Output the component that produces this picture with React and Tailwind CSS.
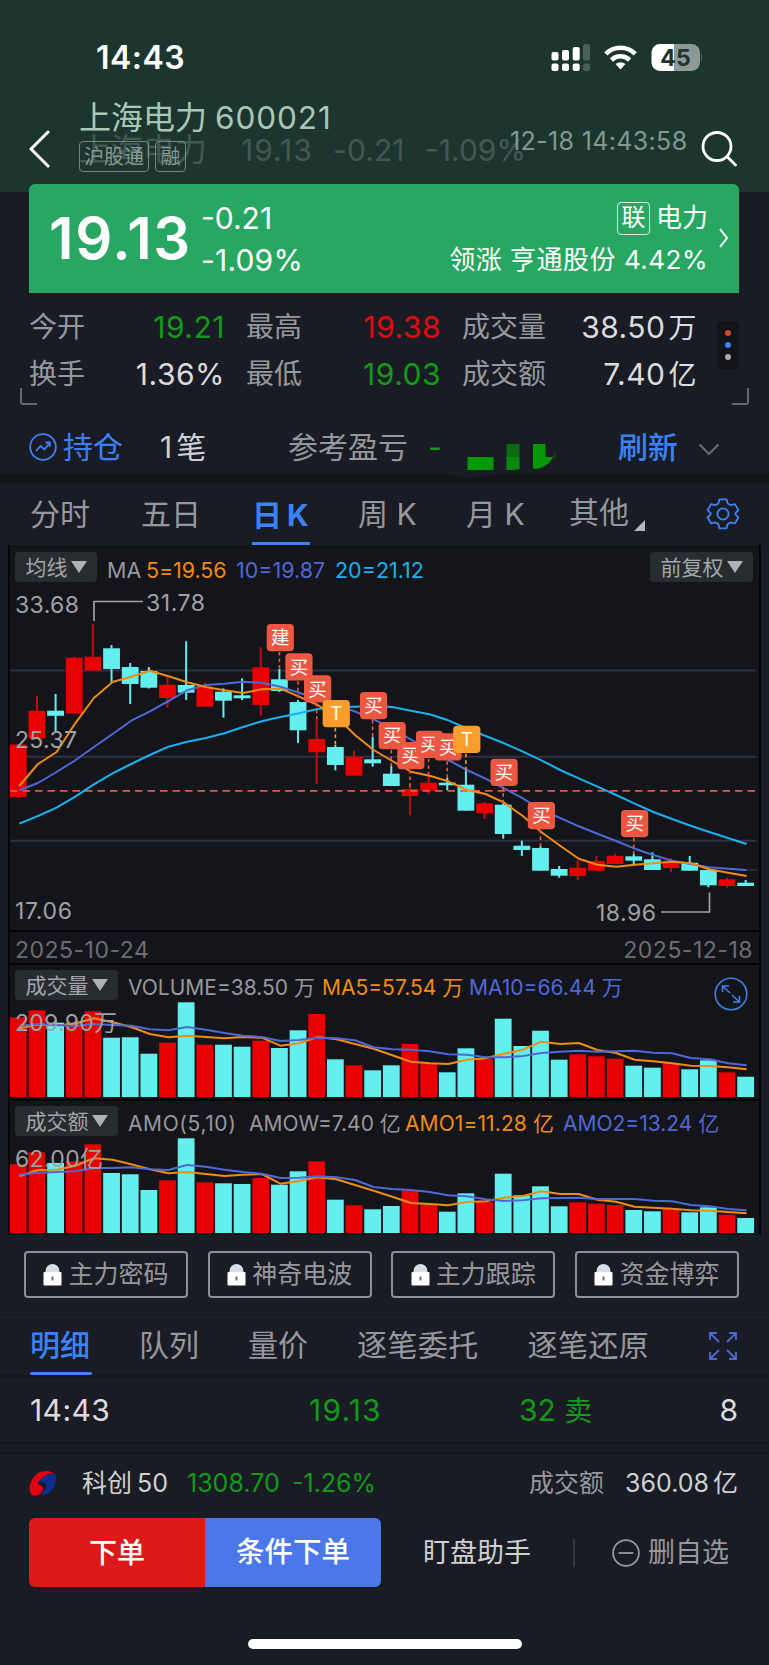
import React from 'react'

const RED = '#e90000'
const CYAN = '#62efee'
const ORANGE = '#f08b16'
const INDIGO = '#5068d6'
const SKY = '#1bb0ee'

// centre of the n-th trading day on the x axis
const cx = (i) => 18.3 + i * 18.65

// [up, open/close top, open/close bottom, high, low]
const candles = [
  [1, 744.5, 797, 744.5, 797],
  [1, 710.7, 738.5, 696, 738.5],
  [0, 710.7, 715.8, 694, 732.5],
  [1, 657.7, 713.5, 656.8, 713.5],
  [1, 656.7, 670.5, 623.7, 670.5],
  [0, 648.3, 669, 645, 682.7],
  [0, 667, 684, 663, 704],
  [0, 671, 687.7, 667, 688.5],
  [1, 684.7, 698, 677.3, 707.7],
  [0, 685, 692.7, 641.3, 700],
  [1, 686.7, 706.7, 682.3, 706.7],
  [0, 691.7, 700.7, 688.3, 717.7],
  [0, 695.3, 698.3, 678.3, 700],
  [1, 667.3, 705, 647.3, 715.7],
  [0, 679.3, 691, 669, 692],
  [0, 702, 730.3, 700, 743],
  [1, 739, 752.3, 718.3, 784],
  [0, 747, 765, 745, 770.3],
  [1, 756.7, 775.7, 750.7, 775.7],
  [0, 759.3, 763.3, 736.7, 766.7],
  [0, 773.7, 786, 766, 786],
  [1, 789, 796, 785, 815.3],
  [1, 782.7, 790.7, 775, 794],
  [0, 782.7, 785.3, 777.7, 790.3],
  [0, 784.7, 810.7, 769.3, 810.7],
  [1, 803.3, 813.3, 801.7, 819],
  [0, 804.7, 834, 803.3, 838.7],
  [0, 845.7, 850, 840.7, 856],
  [0, 848, 870.7, 846, 870.7],
  [0, 869, 875.7, 866, 877.7],
  [1, 867.7, 876, 860, 880],
  [1, 861, 870.7, 855.7, 870.7],
  [1, 855.7, 864, 854, 864],
  [0, 856.3, 860.7, 854, 865.3],
  [0, 859.3, 870, 852.3, 870],
  [1, 860.7, 868, 858.3, 872],
  [0, 862.7, 870.7, 856, 870.7],
  [0, 870, 885.3, 870, 887.3],
  [1, 879.3, 886, 877.7, 887.7],
  [0, 882.7, 886, 880, 886],
]

const ma5 = [786, 764, 752, 723.3, 698, 682, 676.7, 670.7, 676.3, 682.3, 687, 690.3, 693, 689.3, 688.7, 696.7, 705, 716.7, 735, 750, 761, 771.7, 775.7, 781.3, 790, 794, 802.7, 816, 832.3, 845.7, 858.7, 864.7, 866.7, 864.7, 863.3, 861.7, 863.3, 869.3, 872.7, 876]
const ma10 = [790.3, 783, 772, 760.3, 747, 734, 720.7, 711.3, 701, 690.3, 685, 683.7, 681.7, 682.7, 686.7, 692.7, 699, 705, 711.5, 719.3, 728.3, 739.7, 749.3, 760, 770, 778.7, 788.3, 798.3, 810, 818, 826.3, 833.7, 841, 848.7, 855, 860.7, 864, 867.3, 868.7, 870]
const ma20 = [823.7, 816, 807.7, 796.7, 784.3, 773.3, 764, 755, 746.7, 741.7, 738, 733.3, 727, 721.3, 717, 713.3, 709, 707.3, 706.7, 706, 707, 710.7, 714.3, 720.3, 728.3, 736, 743.3, 751.7, 760.3, 770, 778.3, 786.7, 795, 803.7, 812, 819, 825.7, 832, 838, 844]

// [day, label, top of the badge, end of the stem]
const marks = [
  [14, '建', 624, 669],
  [15, '买', 653.3, 700],
  [16, '买', 675.3, 719],
  [17, 'T', 700, 745],
  [19, '买', 692, 737],
  [20, '买', 722, 766],
  [21, '买', 742, 787],
  [22, '买', 730.7, 776],
  [23, '买', 733.3, 779],
  [24, 'T', 725.7, 770],
  [26, '买', 758.7, 804],
  [28, '买', 802, 847],
  [33, '买', 810, 855],
]

const volume = {
  bars: [79.7, 86.7, 74.3, 74.3, 85.7, 59.3, 59.7, 43.3, 54.3, 94.7, 52.3, 52.3, 50.3, 56.3, 49, 66.7, 83, 37.7, 31.7, 26.7, 31.7, 53, 33.3, 24.7, 48.7, 38, 78.3, 51, 66.3, 37.3, 42.7, 40.7, 38.3, 31.3, 29.3, 34, 27.7, 36.7, 24.7, 20.3],
  short: [68.5, 72.5, 71.5, 73.5, 78.7, 74.7, 70, 63, 59.7, 61.3, 60, 58.7, 60, 59.3, 51.3, 53.7, 60, 57.7, 53, 48.3, 41.7, 35.3, 33.7, 33, 37.3, 38.7, 43.3, 47.3, 55.3, 53, 54, 47, 44, 37.3, 35.7, 33.7, 31.3, 31, 29.7, 27.7],
  long: [71, 73, 72, 71, 73, 72, 71.3, 67.7, 66.7, 70, 67.3, 64, 61.3, 60, 56, 57, 59.3, 58.7, 56.7, 49.7, 47.7, 47.3, 45.7, 42.7, 42.3, 39.7, 39.7, 41, 44, 45.3, 46.3, 45.3, 45.7, 46.3, 44.3, 43.7, 39, 37.7, 33.7, 31.7],
}

const amount = {
  bars: [68.7, 80.7, 70, 71.7, 88.7, 60, 58.7, 43, 52.7, 94.7, 50.7, 49.7, 49, 55, 48.3, 61.7, 71.7, 33.3, 27.7, 23.7, 27, 43, 28.7, 21.3, 39.7, 31, 59.3, 37.7, 46.7, 26.7, 30.7, 29.3, 28, 23, 21.7, 24, 20.7, 25.7, 18.3, 15],
  short: [56.7, 63, 63.3, 67.3, 74.7, 73.3, 68.7, 63.7, 59.7, 61, 59, 57, 58.3, 59, 49.3, 52, 55.7, 53.7, 48, 42.3, 36.3, 30, 29, 27.7, 31, 31.7, 35.3, 37, 41.7, 39, 39, 33.3, 31.3, 26.3, 25.3, 24.3, 22.7, 22.3, 21, 19.7],
  long: [58.3, 60.3, 61, 61.7, 65, 65, 65.7, 63.7, 63, 68, 66.3, 63.3, 61, 59.3, 55, 55.3, 56.7, 55.7, 53, 46, 44, 43, 41, 37.7, 36.7, 33.7, 32, 32.7, 34.7, 35, 35.3, 34, 34, 34, 32.3, 31.7, 28, 26.7, 24, 22.7],
}

// averages are drawn one pixel right of the candle centres
const toPoints = (list, fn = (v) => v) => list.map((v, i) => `${cx(i) + 1},${fn(v)}`).join(' ')

function Line({ points, color }) {
  return <polyline points={points} fill="none" stroke={color} strokeWidth="2" strokeLinejoin="round" />
}

function StatusBar() {
  return (
    <div className="flex h-[90px] items-start justify-between pt-[38px] pl-[96px] pr-[67px]">
      <span className="text-[32px] leading-[40px] font-semibold tracking-[0.5px] text-white">14:43</span>
      <svg width="152" height="30" viewBox="550 43 152 30" className="mt-[5px]">
        <g fill="#fff">
          <rect x="551.5" y="52" width="7" height="8.5" rx="2" />
          <rect x="562" y="50" width="7" height="10.5" rx="2" />
          <rect x="572.7" y="47" width="7" height="13.5" rx="2" />
          <rect x="551.5" y="63.5" width="7" height="7.5" rx="2" />
          <rect x="562" y="63.5" width="7" height="7.5" rx="2" />
          <rect x="572.7" y="63.5" width="7" height="7.5" rx="2" />
        </g>
        <g fill="#4b5f5a">
          <rect x="583" y="44" width="7" height="16.5" rx="2" />
          <rect x="583" y="63.5" width="7" height="7.5" rx="2" />
        </g>
        <g fill="none" stroke="#fff" strokeWidth="4.6">
          <path d="M605.8 53.8a21 21 0 0 1 29.4 0" />
          <path d="M611.4 60a13 13 0 0 1 18.2 0" />
        </g>
        <path d="M620.5 69.5l-5-5.4a7.5 7.5 0 0 1 10 0z" fill="#fff" />
        <path d="M660 44h14v27h-14a8.5 8.5 0 0 1-8.5-8.5v-10a8.5 8.5 0 0 1 8.5-8.5z" fill="#fff" />
        <path d="M674 44h17.5a8.5 8.5 0 0 1 8.5 8.5v10a8.5 8.5 0 0 1-8.5 8.5h-17.5z" fill="#8e9996" />
        <path d="M701.5 54c4 1 4 6.500 0 7.500z" fill="#8e9996" />
        <text x="675.5" y="65.5" textAnchor="middle" fontSize="23" fontWeight="700" fill="#1d342f">45</text>
      </svg>
    </div>
  )
}

function Header() {
  return (
    <header className="h-[192px] bg-[#1d352f]">
      <StatusBar />
      <div className="relative flex h-[94px]">
        <svg width="22" height="38" viewBox="0 0 22 38" className="ml-[28px] mt-[40px]" fill="none" stroke="#fff" strokeWidth="3">
          <path d="M20 2L3 19l17 17" strokeLinecap="round" strokeLinejoin="round" />
        </svg>
        <div className="ml-[29px] mt-[8px] w-[431px]">
          <div className="flex h-[40px] items-center whitespace-nowrap text-[#a9c7b7]">
            <span className="text-[32px] leading-none">上海电力</span>
            <span className="ml-[8px] text-[31.5px] leading-none tracking-[0.9px]">600021</span>
          </div>
          <div className="mt-[3px] flex gap-[6px] text-[20px] text-[#84998f]">
            <span className="flex h-[31px] w-[70px] items-center justify-center rounded-[4px] border border-[#71867d] leading-none">沪股通</span>
            <span className="flex h-[31px] w-[31px] items-center justify-center rounded-[4px] border border-[#71867d] leading-none">融</span>
          </div>
        </div>
        <span className="mt-[34px] w-[180px] text-[25px] leading-[34px] tracking-[0.35px] whitespace-nowrap text-[#84988f]">12-18 14:43:58</span>
        <svg width="38" height="38" viewBox="0 0 38 38" className="ml-[11px] mt-[40px]" fill="none" stroke="#fff" strokeWidth="2.8" strokeLinecap="round">
          <circle cx="16" cy="16.5" r="14" />
          <path d="M26 26.5l8.5 8.5" />
        </svg>
        <div className="absolute left-[79px] top-[40px] flex h-[40px] items-center text-[30px] leading-none whitespace-nowrap text-[#9aa8a3] opacity-30">
          <span className="w-[162px] text-[32px]">上海电力</span>
          <span className="w-[92px] tracking-[1px]">19.13</span>
          <span className="w-[92px] tracking-[0.1px]">-0.21</span>
          <span className="tracking-[0px]">-1.09%</span>
        </div>
      </div>
    </header>
  )
}

function PriceCard() {
  return (
    <div className="relative mr-[30px] ml-[29px] -mt-2 flex h-[109px] rounded-t-[6px] bg-[#27a761] text-white">
      <span className="w-[172px] pl-[20px] text-[58px] leading-[108px] font-semibold tracking-[1.6px]">19.13</span>
      <div className="pt-[15px] text-[30px] leading-[38px]">
        <div>-0.21</div>
        <div className="mt-[4px] tracking-[0.2px]">-1.09%</div>
      </div>
      <div className="ml-auto pt-[16px] text-[26px]">
        <div className="flex h-[36px] items-center justify-end gap-[6px] leading-none">
          <span className="flex h-[33px] w-[33px] items-center justify-center rounded-[4px] border border-white/80 text-[24px]">联</span>
          <span>电力</span>
        </div>
        <div className="mt-[6px] text-right leading-[36px] tracking-[0.5px] whitespace-nowrap">领涨 亨通股份 4.42%</div>
      </div>
      <svg width="12" height="22" viewBox="0 0 12 22" className="mt-[43px] ml-[10px] mr-[9px]" fill="none" stroke="#fff" strokeWidth="2">
        <path d="M2 2l7 9-7 9" />
      </svg>
    </div>
  )
}

function Stat({ label, value, color }) {
  return (
    <div className="flex items-center justify-between whitespace-nowrap">
      <span className="text-[28px] leading-none text-[#97989d]">{label}</span>
      <span className={`text-[30px] leading-none tracking-[0.5px] ${color}`}>{value}</span>
    </div>
  )
}

function Stats() {
  return (
    <div className="h-[111px]">
      <div className="flex pt-[10px] pl-[29px]">
        <div className="grid w-[668px] grid-cols-[196px_195px_235px] grid-rows-[47px_47px] gap-x-[21px]">
          <Stat label="今开" value="19.21" color="text-[#129a18]" />
          <Stat label="最高" value="19.38" color="text-[#e20b0b]" />
          <Stat label="成交量" value={<>38.50<span className="ml-[3px] text-[28px]">万</span></>} color="text-[#dcdcde]" />
          <Stat label="换手" value="1.36%" color="text-[#dcdcde]" />
          <Stat label="最低" value="19.03" color="text-[#129a18]" />
          <Stat label="成交额" value={<>7.40<span className="ml-[3px] text-[28px]">亿</span></>} color="text-[#dcdcde]" />
        </div>
        <div className="ml-[20px] mt-[18px] flex h-[48px] w-[22px] flex-col items-center justify-center gap-[6px] rounded-[4px] bg-[#131419]">
          <span className="h-[6px] w-[6px] rounded-full bg-[#d5482f]" />
          <span className="h-[6px] w-[6px] rounded-full bg-[#3c82f4]" />
          <span className="h-[6px] w-[6px] rounded-full bg-[#aaabae]" />
        </div>
      </div>
      <div className="-mt-[9px] flex justify-between px-[20px]">
        <span className="h-[17px] w-[17px] rounded-bl-[3px] border-b-2 border-l-2 border-[#66686e]" />
        <span className="h-[17px] w-[17px] rounded-br-[3px] border-r-2 border-b-2 border-[#66686e]" />
      </div>
    </div>
  )
}

function Position() {
  return (
    <div className="flex h-[70px] items-center pt-[15px] text-[30px] leading-none whitespace-nowrap">
      <svg width="28" height="28" viewBox="0 0 28 28" className="ml-[29px]" fill="none" stroke="#3c82f6" strokeWidth="1.8">
        <circle cx="14" cy="14" r="12.8" />
        <path d="M7 18l4.5-5 4 3.5 5-6.5M16.5 9.5h4.3v4.3" />
      </svg>
      <span className="ml-[6px] text-[#3c82f6]">持仓</span>
      <span className="ml-[37px] w-[128px] text-[#cfd0d2]"><span className="mr-[4px]">1</span>笔</span>
      <span className="text-[#97989d]">参考盈亏</span>
      <span className="ml-[20px] w-[30px] text-[#129a18]">-</span>
      <svg width="110" height="28" viewBox="460 442 110 28" className="mt-[20px]">
        <rect x="469.5" y="456" width="26" height="13" fill="#079807" />
        <rect x="508.5" y="443" width="13" height="13" fill="#0b6b12" />
        <path d="M508.500 456h13v12q-4 1-8 1h-5z" fill="#0a8a0d" />
        <path d="M535 443h12.500v13h7.500c-3 6-9 11.500-18 12l-2-1z" fill="#079807" />
        <path d="M555 456q3-4 3.500-7-.5 5-3 9z" fill="#0b6b12" />
      </svg>
      <span className="ml-auto font-medium text-[#3c82f6]">刷新</span>
      <svg width="22" height="13" viewBox="0 0 22 13" className="mt-[6px] ml-[20px] mr-[49px]" fill="none" stroke="#66686e" strokeWidth="2.2">
        <path d="M1.500 1.500L11 11l9.500-9.500" />
      </svg>
    </div>
  )
}

function PeriodTabs() {
  return (
    <div className="grid h-[62px] grid-cols-[111px_111px_106px_108px_103px_138px_1fr] items-center pl-[30px] text-[30px] leading-none whitespace-nowrap text-[#97989d]">
      <span>分时</span>
      <span>五日</span>
      <span className="flex h-[62px] w-[58px] flex-col justify-between text-[#3c82f6]">
        <span className="pt-[17px] font-bold">日<span className="ml-[5px]">K</span></span>
        <span className="h-[3px] bg-[#3c82f6]" />
      </span>
      <span>周 K</span>
      <span>月 K</span>
      <span className="flex">
        其他
        <svg width="11" height="11" viewBox="0 0 11 11" className="mt-[23px] ml-[5px]">
          <path d="M11 0v11H0z" fill="#b4b5b8" />
        </svg>
      </span>
      <svg width="34" height="34" viewBox="0 0 34 34" fill="none" stroke="#3c82f6" strokeWidth="1.8" strokeLinejoin="round" className="-ml-px">
        <path d="M13.500 2.500h7l1.200 4.200 3 1.700 4.200-1.100 3.500 6-3 3.100v1.200l3 3.100-3.500 6-4.200-1.100-3 1.700-1.200 4.200h-7l-1.200-4.200-3-1.700-4.200 1.100-3.500-6 3-3.100v-1.200l-3-3.100 3.500-6 4.200 1.100 3-1.700z" transform="translate(0 -0.200)" />
        <circle cx="17" cy="17" r="5.6" />
      </svg>
    </div>
  )
}

function Chip({ children, className }) {
  return (
    <span className={`flex h-[30px] items-center justify-center rounded-[4px] bg-[#282b30] text-[21px] leading-none text-[#a5a6aa] ${className}`}>
      {children}
      <svg width="16" height="12" viewBox="0 0 16 12" className="ml-[3px]">
        <path d="M0 0h16L8 12z" fill="#b0b1b4" />
      </svg>
    </span>
  )
}

function KChart() {
  return (
    <div className="h-[385px]">
      <div className="flex h-[38px] items-start pt-[7px] pr-[6px] pl-[5px] text-[21.5px] leading-[36px] whitespace-nowrap">
        <Chip className="w-[82px]">均线</Chip>
        <span className="ml-[10px] w-[39px] text-[#97989d]">MA</span>
        <span className="w-[90px] tracking-[-0.1px] text-[#f08b16]">5=19.56</span>
        <span className="w-[99px] text-[#5068d6]">10=19.87</span>
        <span className="text-[#1bb0ee]">20=21.12</span>
        <Chip className="ml-auto w-[103px]">前复权</Chip>
      </div>
      <svg width="748" height="347" viewBox="10 583 748 347" className="block">
        <g stroke="#2f3040" strokeWidth="2">
          <path d="M10 670.5H756M10 756.7H756M10 840.7H756" />
          <path d="M736 870H757" stroke="#2a2b31" />
        </g>
        {candles.map(([up, top, bottom, high, low], i) => (
          <g key={i} fill={up ? RED : CYAN}>
            <rect x={cx(i) - 1} y={high} width="2" height={low - high} fill={up ? '#c40a12' : CYAN} />
            <rect x={cx(i) - 8.4} y={top} width="16.8" height={bottom - top} />
          </g>
        ))}
        <path d="M10 790.8H756" stroke="#e0594c" strokeWidth="1.8" strokeDasharray="7.5 5" />
        <Line points={toPoints(ma20)} color={SKY} />
        <Line points={toPoints(ma10)} color={INDIGO} />
        <Line points={toPoints(ma5)} color={ORANGE} />
        {marks.map(([day, label, y, end]) => {
          const fill = label === 'T' ? '#fb9d2c' : '#ec5741'
          return (
            <g key={day}>
              <path d={`M${cx(day)} ${y + 28}V${end}`} stroke={fill} strokeWidth="1.6" strokeDasharray="3.5 3" />
              <rect x={cx(day) - 12.7} y={y} width="27.2" height="27.2" rx="4" fill={fill} />
              <text x={cx(day) + 0.9} y={y + 20.3} textAnchor="middle" fontSize="18.5" fill="#fff">{label}</text>
            </g>
          )
        })}
        <g fontSize="23" fill="#a0a1a5">
          <text x="15" y="613" textLength="64">33.68</text>
          <text x="15" y="747.5" textLength="62">25.37</text>
          <text x="15" y="918.5" textLength="57">17.06</text>
          <text x="146" y="610.5" textLength="59">31.78</text>
          <text x="596" y="921" textLength="60">18.96</text>
        </g>
        <g fill="none" stroke="#a0a1a5" strokeWidth="1.7">
          <path d="M94 621V601.5H143" />
          <path d="M661 912H709.5V892.5" />
        </g>
      </svg>
    </div>
  )
}

function BarChart({ data, scale, scaleWidth }) {
  const up = (v) => 95 - v
  return (
    <svg width="748" height="97" viewBox="10 0 748 97" className="block">
      {data.bars.map((h, i) => (
        <rect key={i} x={cx(i) - 8.4} y={up(h)} width="16.8" height={h} fill={candles[i][0] ? RED : CYAN} />
      ))}
      <Line points={toPoints(data.short, up)} color={ORANGE} />
      <Line points={toPoints(data.long, up)} color={INDIGO} />
      <text x="15" y="28.5" fontSize="23" fill="#a0a1a5" textLength={scaleWidth}>{scale}</text>
    </svg>
  )
}

function SubPanel({ name, children, data, scale, scaleWidth, action }) {
  return (
    <div className="relative border-t-2 border-[#030407]">
      <div className="flex h-[37px] items-start pt-[5px] pl-[5px] text-[21px] leading-[36px] whitespace-nowrap">
        <Chip className="w-[103px]">{name}</Chip>
        {children}
      </div>
      <BarChart data={data} scale={scale} scaleWidth={scaleWidth} />
      {action}
    </div>
  )
}

function Charts() {
  return (
    <div className="mx-[8px] border-x-2 border-[#05060a] bg-[#14151a]">
      <KChart />
      <div className="flex h-[33px] items-end justify-between border-t-2 border-[#030407] pr-[6px] pl-[5px] text-[23px] leading-[26px] tracking-[0.5px] text-[#6c6d72]">
        <span>2025-10-24</span>
        <span>2025-12-18</span>
      </div>
      <SubPanel
        name="成交量"
        data={volume}
        scale="209.90万"
        scaleWidth="102"
        action={
          <svg width="36" height="34" viewBox="0 0 36 34" className="absolute top-[12px] right-[10px]" fill="none" stroke="#3c82e0" strokeWidth="1.6">
            <circle cx="18" cy="17" r="15.8" />
            <path d="M9.500 15V9h6.500M9.500 9l7.500 7M26.500 19v6H20M26.500 25L19 18" />
          </svg>
        }
      >
        <span className="ml-[10px] w-[194px] text-[#97989d]">VOLUME=38.50 万</span>
        <span className="w-[147px] text-[#f08b16]">MA5=57.54 万</span>
        <span className="text-[#5068d6]">MA10=66.44 万</span>
      </SubPanel>
      <SubPanel name="成交额" data={amount} scale="62.00亿" scaleWidth="88">
        <span className="ml-[10px] w-[121px] tracking-[0.6px] text-[#97989d]">AMO(5,10)</span>
        <span className="w-[156px] text-[#97989d]">AMOW=7.40 亿</span>
        <span className="w-[158px] tracking-[0.1px] text-[#f08b16]">AMO1=11.28 亿</span>
        <span className="text-[#5068d6]">AMO2=13.24 亿</span>
      </SubPanel>
    </div>
  )
}

function LockButton({ label }) {
  return (
    <button className="flex h-[47px] w-[164px] items-center justify-center gap-[6px] rounded-[4px] border-2 border-[#8f9095] text-[25px] leading-none text-[#97989d]">
      <svg width="19" height="22" viewBox="0 0 19 22">
        <path d="M3.500 9V7a6 6 0 0 1 12 0v2" fill="#d9dbe6" stroke="#d9dbe6" strokeWidth="2" />
        <rect x="0.5" y="8" width="18" height="13.5" rx="1" fill="#fff" />
        <path d="M9.500 12.500v4" stroke="#6b6d7c" strokeWidth="2" />
      </svg>
      {label}
    </button>
  )
}

function DetailTabs() {
  return (
    <div className="flex h-[63px] border-y border-b-2 border-[#15161c] pl-[30px] text-[30px] leading-[61px] whitespace-nowrap text-[#97989d]">
      <span className="flex w-[62px] flex-col justify-between text-[#3c82f6]">
        <span className="h-[56px] font-medium">明细</span>
        <span className="h-[3px] rounded-full bg-[#3c82f6]" />
      </span>
      <span className="ml-[47px]">队列</span>
      <span className="ml-[49px]">量价</span>
      <span className="ml-[49px] tracking-[0.4px]">逐笔委托</span>
      <span className="ml-[49px] tracking-[0.4px]">逐笔还原</span>
      <svg width="28" height="28" viewBox="0 0 28 28" className="mt-[17px] ml-[60px]" fill="none" stroke="#5068d6" strokeWidth="1.8">
        <path d="M1 8V1h7M1 1l9 9M20 1h7v7M27 1l-9 9M1 20v7h7M1 27l9-9M20 27h7v-7M27 27l-9-9" />
      </svg>
    </div>
  )
}

function TickRow() {
  return (
    <div className="flex h-[67px] items-center border-b-2 border-[#15161c] pr-[31px] pl-[30px] text-[30px] leading-none whitespace-nowrap text-[#dcdcde]">
      <span className="w-[279px] tracking-[0.4px]">14:43</span>
      <span className="w-[210px] tracking-[1.2px] text-[#129a18]">19.13</span>
      <span className="text-[#129a18]">32 <span className="text-[28px]">卖</span></span>
      <span className="ml-auto">8</span>
    </div>
  )
}

function IndexRow() {
  return (
    <div className="mt-[8px] flex h-[60px] items-center border-t-2 border-[#15161c] pr-[31px] pl-[29px] text-[25px] leading-none whitespace-nowrap text-[#d0d1d3]">
      <svg width="28" height="26" viewBox="0 0 28 26">
        <path d="M27 6C24 1 15-1 8 4S-1 20 2 24s11 1 12-5c.5-4-4-3-5-5 0-4 6-7 10-10 3-1 6 0 8 2z" fill="#e60012" />
        <path d="M27 6c1 8-3 16-12 19-1 .5-3 .5-3 0 4-4 6-8 5-11-2-3-6-1-7-1 2-5 8-9 12-9 2 0 4 0 5 2z" fill="#0b2f8e" />
      </svg>
      <span className="ml-[25px] w-[105px]">科创<span className="ml-[5px]">50</span></span>
      <span className="w-[105px] text-[#129a18]">1308.70</span>
      <span className="text-[#129a18]">-1.26%</span>
      <span className="ml-auto text-[#97989d]">成交额</span>
      <span className="ml-[21px]">360.08<span className="ml-[4px]">亿</span></span>
    </div>
  )
}

function ActionBar() {
  return (
    <div className="mt-[6px] flex h-[69px] items-center pl-[29px] leading-none whitespace-nowrap">
      <button className="h-full w-[176px] rounded-l-[6px] bg-[#dc1a1a] text-[28px] font-medium text-white">下单</button>
      <button className="h-full w-[176px] rounded-r-[6px] bg-[#4b78e9] text-[28.5px] font-medium text-white">条件下单</button>
      <span className="ml-[42px] text-[27px] text-[#d0d1d3]">盯盘助手</span>
      <span className="ml-[42px] h-[28px] w-[2px] bg-[#34353c]" />
      <svg width="28" height="28" viewBox="0 0 28 28" className="ml-[37px]" fill="none" stroke="#97989d" strokeWidth="1.8">
        <circle cx="14" cy="14" r="12.9" />
        <path d="M6.500 14h15" />
      </svg>
      <span className="ml-[8px] text-[27px] text-[#97989d]">删自选</span>
    </div>
  )
}

export default function App() {
  return (
    <div className="h-[1665px] w-[769px] overflow-hidden bg-[#1a1c25] font-['Inter','Noto_Sans_CJK_SC',sans-serif]">
      <Header />
      <PriceCard />
      <Stats />
      <Position />
      <div className="h-[9px] bg-[#141519]">
        <svg width="46" height="5" viewBox="0 0 46 5" className="ml-[450px]">
          <path d="M0 0h46L23 4q-4 1-8 0z" fill="#1a1c25" />
        </svg>
      </div>
      <PeriodTabs />
      <Charts />
      <div className="flex justify-between pt-[16px] pr-[30px] pb-[16px] pl-[24px]">
        <LockButton label="主力密码" />
        <LockButton label="神奇电波" />
        <LockButton label="主力跟踪" />
        <LockButton label="资金博弈" />
      </div>
      <DetailTabs />
      <TickRow />
      <IndexRow />
      <ActionBar />
      <div className="mx-auto mt-[52px] h-[10px] w-[274px] rounded-full bg-white" />
    </div>
  )
}
